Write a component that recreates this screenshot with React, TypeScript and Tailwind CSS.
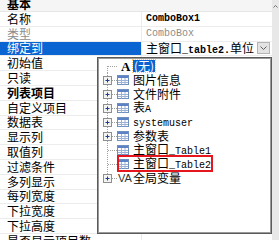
import React from "react";

const CJK = "font-['Noto_Sans_CJK_SC',sans-serif]";
const MONO = "font-['Liberation_Mono',monospace] text-[10px]";

type Row = {
  label: string;
  kind?: "cat" | "disabled" | "selected";
  value?: React.ReactNode;
};

const rows: Row[] = [
  { label: "名称", value: <span className={`${MONO} font-bold`}>ComboBox1</span> },
  { label: "类型", kind: "disabled", value: <span className={`${MONO} text-[#8c8c8c]`}>ComboBox</span> },
  { label: "绑定到", kind: "selected" },
  { label: "初始值" },
  { label: "只读" },
  { label: "列表项目", kind: "cat" },
  { label: "自定义项目" },
  { label: "数据表" },
  { label: "显示列" },
  { label: "取值列" },
  { label: "过滤条件" },
  { label: "多列显示" },
  { label: "每列宽度" },
  { label: "下拉宽度" },
  { label: "下拉高度" },
  { label: "是否显示项目数" },
];

function Combo() {
  return (
    <div className="flex items-center h-full w-full bg-white pr-[2px]">
      <span className="flex-1 whitespace-nowrap leading-none">
        <span className="text-[12px]">主窗口</span>
        <span className={`${MONO} font-bold`}>_table2.</span>
        <span className="text-[12px]">单位</span>
      </span>
      <span className="w-[13px] h-[12px] bg-[#e3e3e3] border border-[#b4b4b4] flex items-center justify-center">
        <svg width="7" height="4" viewBox="0 0 7 4">
          <path d="M0.5 0.5 L3.5 3.5 L6.5 0.5" fill="none" stroke="#606060" strokeWidth="1" />
        </svg>
      </span>
    </div>
  );
}

function TableIcon() {
  return (
    <svg width="12" height="10" viewBox="0 0 12 10">
      <rect x="0.5" y="0.5" width="11" height="9" fill="#ffffff" stroke="#6f8fbf" />
      <rect x="1" y="1" width="10" height="2" fill="#5b82c4" />
      <path d="M1 5.5 H11 M1 7.5 H11 M4.5 3 V9.5 M8 3 V9.5" stroke="#9db3d6" strokeWidth="1" />
    </svg>
  );
}

function Connector({ plus, first, last }: { plus?: boolean; first?: boolean; last?: boolean }) {
  return (
    <svg width="18" height="14" viewBox="0 0 18 14" className="shrink-0">
      <line
        x1="8.5"
        y1={first ? 7 : 0}
        x2="8.5"
        y2={last ? 7 : 14}
        stroke="#a0a0a0"
        strokeDasharray="1 1"
      />
      <line x1="9" y1="7.5" x2="18" y2="7.5" stroke="#a0a0a0" strokeDasharray="1 1" />
      {plus && (
        <g>
          <rect x="4.5" y="3.5" width="8" height="8" fill="#f4f4f4" stroke="#8f8f8f" />
          <path d="M6.5 7.5 H10.5 M8.5 5.5 V9.5" stroke="#1f3f7f" strokeWidth="1" />
        </g>
      )}
    </svg>
  );
}

type TItem = { text: React.ReactNode; plus?: boolean; icon: "table" | "A" | "VA"; mark?: boolean; sel?: boolean };

const tree: TItem[] = [
  { icon: "A", sel: true, text: "(无)" },
  { icon: "table", plus: true, text: "图片信息" },
  { icon: "table", plus: true, text: "文件附件" },
  { icon: "table", plus: true, text: <>表<span className={MONO}>A</span></> },
  { icon: "table", plus: true, text: <span className={MONO}>systemuser</span> },
  { icon: "table", plus: true, text: "参数表" },
  { icon: "table", text: <>主窗口<span className={MONO}>_Table1</span></> },
  { icon: "table", mark: true, text: <>主窗口<span className={MONO}>_Table2</span></> },
  { icon: "VA", plus: true, text: "全局变量" },
];

function Dropdown() {
  return (
    <div className="absolute left-[97px] top-[57px] w-[175px] h-[177px] bg-white border border-[#5a5a5a] shadow-[inset_1px_1px_0_#9a9a9a,inset_-1px_-1px_0_#9a9a9a]">
      <div className="flex flex-col pt-[1px] pl-[1px]">
        {tree.map((t, i) => (
          <div key={i} className="relative flex items-center h-[14px] whitespace-nowrap">
            <Connector plus={t.plus} first={i === 0} last={i === tree.length - 1} />
            <div className="w-[16px] h-[14px] flex items-center shrink-0">
              {t.icon === "table" && <TableIcon />}
              {t.icon === "A" && (
                <span className="ml-[4px] font-['Liberation_Serif',serif] font-bold text-[13px] leading-none">A</span>
              )}
              {t.icon === "VA" && (
                <span className="ml-[1px] font-['Liberation_Sans',sans-serif] text-[11px] leading-none text-[#303030]">VA</span>
              )}
            </div>
            {t.sel ? (
              <span className="bg-[#0a64d2] text-white px-[1px] h-[12px] flex items-center leading-none outline-1 outline-dotted outline-[#ffcc66]">
                {t.text}
              </span>
            ) : (
              <span className="leading-none">{t.text}</span>
            )}
            {t.mark && (
              <span className="absolute left-[18px] top-[-2px] w-[96px] h-[17px] border-2 border-[#e5161d]" />
            )}
          </div>
        ))}
      </div>
    </div>
  );
}

export default function App() {
  return (
    <div className={`relative w-[279px] h-[240px] overflow-hidden bg-white text-[12px] text-black ${CJK}`}>
      <div className="flex">
        <div className="flex-1 flex flex-col">
          <div className="h-[12px] flex items-center pl-[7px] font-bold bg-[#f5f5f5] border-b border-[#e6e6e6] overflow-hidden">
            <span className="leading-none mt-[-3px]">基本</span>
          </div>
          {rows.map((r, i) => (
            <div key={i} className="flex h-[14.8px] border-b border-[#ececec] shrink-0">
              <div
                className={`w-[142px] shrink-0 flex items-center pl-[7px] border-r border-[#ececec] whitespace-nowrap ${
                  r.kind === "selected" ? "bg-[#0a64d2] text-white" : ""
                } ${r.kind === "disabled" ? "text-[#8c8c8c]" : ""} ${r.kind === "cat" ? "font-bold" : ""}`}
              >
                <span className="leading-none">{r.label}</span>
              </div>
              <div className="flex-1 flex items-center pl-[4px] whitespace-nowrap overflow-hidden">
                {r.kind === "selected" ? <Combo /> : r.value}
              </div>
            </div>
          ))}
        </div>
        <div className="w-[7px] shrink-0 bg-[#e8e8e8] flex justify-center pt-[5px]">
          <svg width="5" height="3" viewBox="0 0 5 3">
            <path d="M0.5 2.5 L2.5 0.5 L4.5 2.5" fill="none" stroke="#707070" />
          </svg>
        </div>
      </div>
      <Dropdown />
    </div>
  );
}
